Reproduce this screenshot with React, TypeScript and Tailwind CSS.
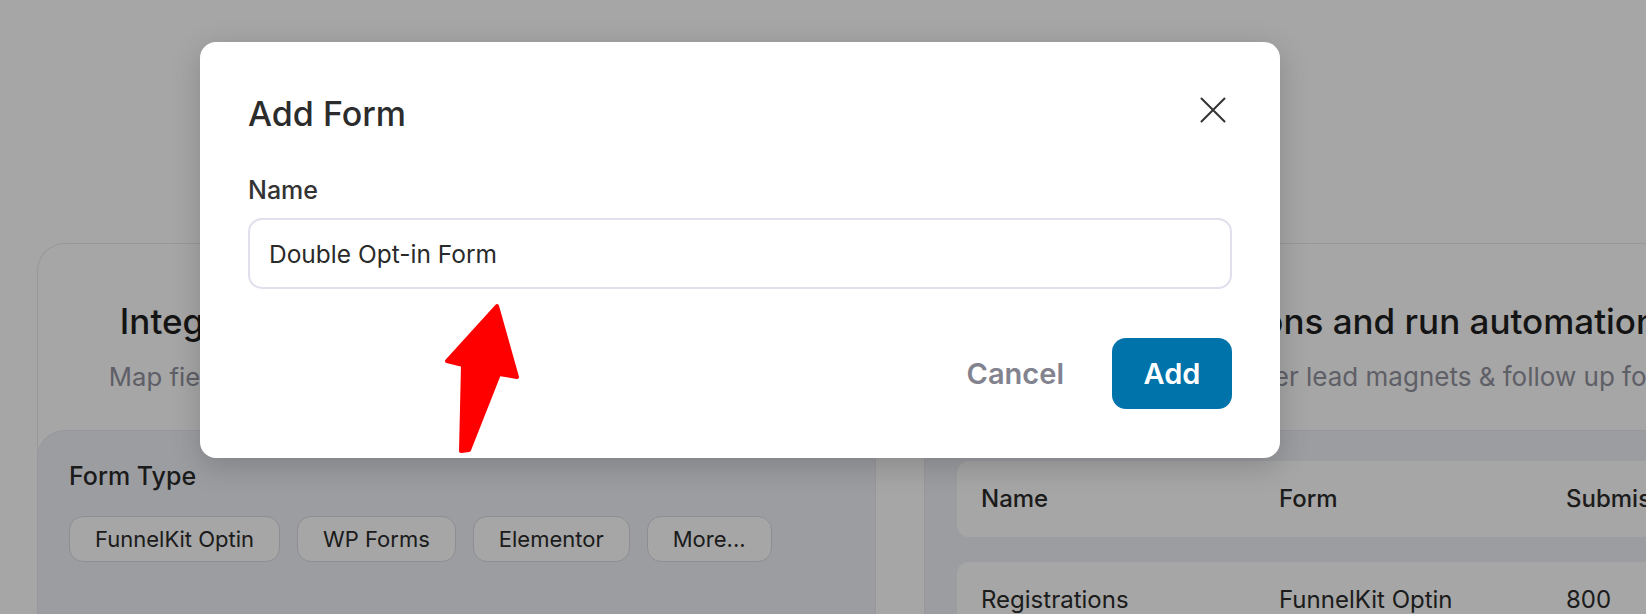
// Background page (dimmed by the modal backdrop)

function FormTypeChip({ label }: { label: string }) {
  return (
    <span className="flex h-[46px] items-center rounded-[14px] border-[1.5px] border-[#d9d9e2] bg-white px-[25px] text-[22px] text-[#2b2b2b]">
      {label}
    </span>
  )
}

function IntegrateCard() {
  return (
    <div className="w-[839px] shrink-0 rounded-t-[28px] border border-b-0 border-[#e8e8f0]">
      <div className="flex h-[186px] flex-col items-center pt-[57px]">
        <h2 className="whitespace-nowrap text-[35px] leading-[40px] font-medium text-[#1f1f1f]">Integrate with your existing form plugins</h2>
        <p className="mt-[20px] whitespace-nowrap text-[25.7px] leading-[32px] text-[#92929e]">Map fields from your existing forms to sync leads to CRM</p>
      </div>

      <div className="-mx-px h-[200px] rounded-t-[28px] border border-b-0 border-[#e8e8f0] bg-[#f0f2f8] px-[31px] pt-[30px]">
        <h3 className="text-[25px] leading-[30px] font-medium text-[#2a2a2a]">Form Type</h3>

        <div className="mt-[25px] flex gap-[17px]">
          <FormTypeChip label="FunnelKit Optin" />
          <FormTypeChip label="WP Forms" />
          <FormTypeChip label="Elementor" />
          <FormTypeChip label="More..." />
        </div>
      </div>
    </div>
  )
}

function SubmissionsCard() {
  const row = "grid h-[76px] grid-cols-[298px_287px_1fr] items-center rounded-[12px] bg-white px-[24px] text-[24px] text-[#2b2b2b]"

  return (
    <div className="w-[839px] shrink-0 rounded-t-[28px] border border-b-0 border-[#e8e8f0]">
      <div className="flex h-[186px] flex-col items-center pt-[57px]">
        <h2 className="whitespace-nowrap text-[35px] leading-[40px] font-medium text-[#1f1f1f]">Track submissions and run automations</h2>
        <p className="mt-[20px] whitespace-nowrap text-[26px] leading-[32px] text-[#92929e]">Capture more leads, deliver lead magnets &amp; follow up for sales</p>
      </div>

      <div className="-mx-px h-[200px] rounded-t-[28px] border border-b-0 border-[#e8e8f0] bg-[#f0f2f8] px-[32px] pt-[30px]">
        <div className={row + " font-medium"}>
          <span>Name</span>
          <span>Form</span>
          <span>Submissions</span>
        </div>

        <div className={row + " mt-[25px]"}>
          <span>Registrations</span>
          <span>FunnelKit Optin</span>
          <span>800</span>
        </div>
      </div>
    </div>
  )
}

// Modal

function CloseIcon() {
  return (
    <svg width="26" height="26" viewBox="0 0 26 26" fill="none" stroke="currentColor" strokeWidth="2" strokeLinecap="round">
      <path d="M1.5 1.5 24.5 24.5M24.5 1.5 1.5 24.5" />
    </svg>
  )
}

function AddFormModal() {
  return (
    <div className="absolute left-[200px] top-[42px] flex h-[416px] w-[1080px] flex-col rounded-[16px] bg-white px-[48px] pt-[55px] shadow-[0_8px_30px_rgba(0,0,0,0.18)]">
      <div className="flex items-start justify-between">
        <h2 className="text-[34px] leading-[34px] font-medium text-[#2c2c2c]">Add Form</h2>
        <button className="mr-[6px] text-[#333]">
          <CloseIcon />
        </button>
      </div>

      <label className="mt-[47px] text-[25px] leading-[25px] font-medium text-[#333]">Name</label>
      <input
        readOnly
        value="Double Opt-in Form"
        className="mt-[15px] h-[71px] w-full rounded-[14px] border-2 border-[#e0dfee] px-[19px] text-[24.5px] text-[#2a2a2a] outline-none"
      />

      <div className="mt-[49px] flex items-center justify-end gap-[48px]">
        <button className="text-[29px] font-semibold text-[#83838f]">Cancel</button>
        <button className="h-[71px] w-[120px] rounded-[14px] bg-[#0073aa] text-[29px] font-semibold text-white">Add</button>
      </div>
    </div>
  )
}

function PointerArrow() {
  return (
    <svg className="absolute left-[440px] top-[300px]" width="85" height="160" viewBox="0 0 85 160">
      <polygon
        points="57,6 77,77 59,74 29,150 21,151 23,65 7,61"
        fill="#ff0000"
        stroke="#ff0000"
        strokeWidth="4"
        strokeLinejoin="round"
      />
    </svg>
  )
}

export default function App() {
  return (
    <div className="relative h-[614px] w-[1646px] overflow-hidden bg-white font-['Inter',sans-serif]">
      <div className="flex w-[1800px] gap-[48px] px-[37px] pt-[243px]">
        <IntegrateCard />
        <SubmissionsCard />
      </div>

      <div className="absolute inset-0 bg-black/35" />

      <AddFormModal />
      <PointerArrow />
    </div>
  )
}
